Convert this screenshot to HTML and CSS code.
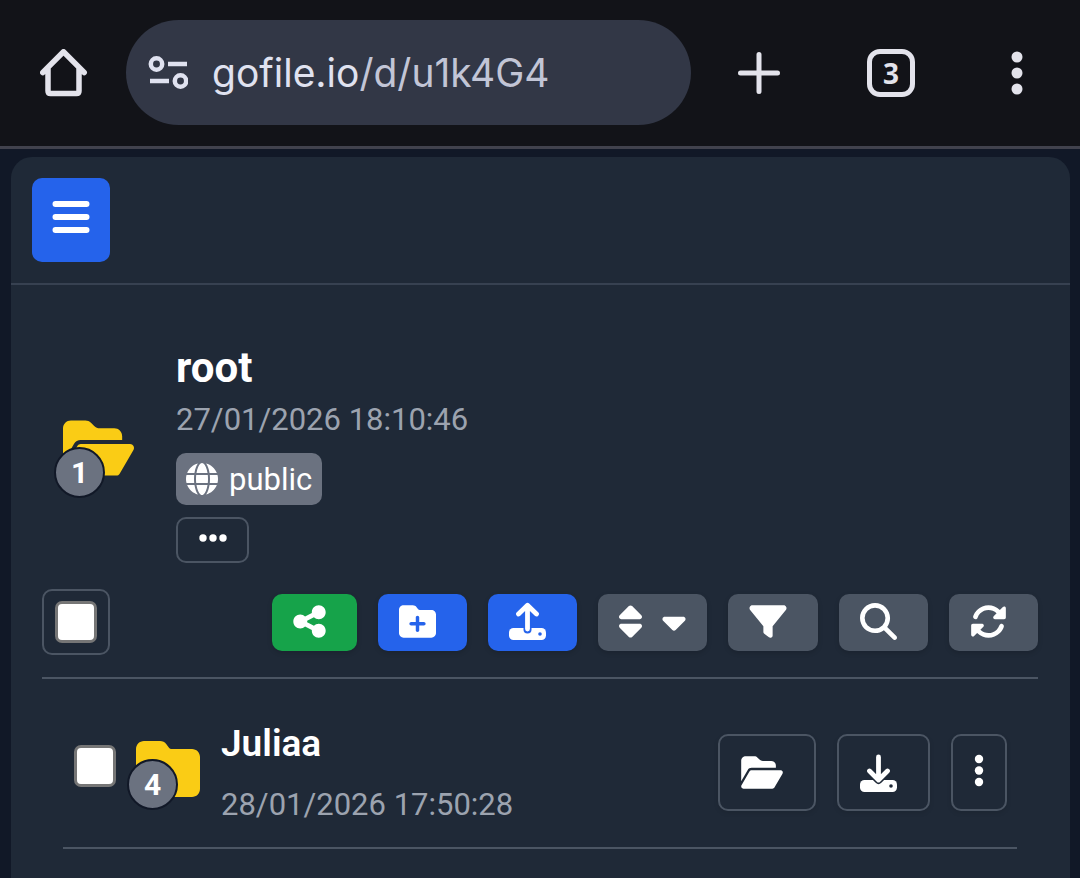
FILE: index.html
```
<!DOCTYPE html>
<html lang="en">
<head>
    <meta charset="UTF-8">
    <meta name="viewport" content="width=device-width, initial-scale=1.0">
    <title>root - Gofile</title>
    <link rel="stylesheet" href="styles.css">
</head>
<body>
    <header class="browser-bar">
        <button class="bar-btn" type="button" aria-label="Home">
            <svg width="48" height="48" viewBox="0 0 48 48" fill="none" stroke="currentColor" stroke-width="5.500" stroke-linejoin="round" stroke-linecap="round"><path d="M2.800 23.500L23.500 2.800L44.200 23.500M8 18.500V42Q8 44.500 10.500 44.500H36.500Q39 44.500 39 42V18.500"/></svg>
        </button>
        <div class="address">
            <button class="site-info" type="button" aria-label="Site information">
                <svg width="40" height="34" viewBox="0 0 40 34" fill="none" stroke="currentColor" stroke-width="4.500"><circle cx="8.500" cy="8" r="5.700"/><path d="M20 8H39M2 25H21"/><circle cx="32.500" cy="25" r="5.700"/></svg>
            </button>
            <button class="url" type="button" aria-label="Address">gofile.io<span class="url-path">/d/u1k4G4</span></button>
        </div>
        <nav class="bar-actions" aria-label="Browser">
            <button class="bar-btn" type="button" aria-label="New tab">
                <svg width="44" height="44" viewBox="0 0 44 44" stroke="currentColor" stroke-width="5" stroke-linecap="round"><path d="M22 3.500V40.500M3.500 22H40.500"/></svg>
            </button>
            <button class="bar-btn tab-count" type="button" aria-label="Open tabs: 3">3</button>
            <button class="bar-btn bar-menu" type="button" aria-label="More">
                <svg width="12" height="44" viewBox="0 0 12 44" fill="currentColor"><circle cx="6" cy="6" r="5.500"/><circle cx="6" cy="22" r="5.500"/><circle cx="6" cy="38" r="5.500"/></svg>
            </button>
        </nav>
    </header>

    <main class="panel">
        <div class="panel-header">
            <button class="menu-btn" type="button" aria-label="Menu">
                <svg width="38" height="34" viewBox="0 0 38 34" stroke="currentColor" stroke-width="6" stroke-linecap="round"><path d="M3.500 4H34.500M3.500 17H34.500M3.500 30H34.500"/></svg>
            </button>
        </div>

        <div class="content">
            <section class="root">
                <div class="root-icon">
                    <div class="folder folder-open">
                        <svg width="71" height="64" viewBox="0 0 576 512" fill="currentColor"><path d="M88.700 223.800L0 375.800V96C0 60.700 28.700 32 64 32h117.500c17 0 33.300 6.700 45.300 18.700l26.500 26.500c12 12 28.300 18.700 45.300 18.700H416c35.300 0 64 28.700 64 64v32H144c-22.800 0-43.800 12.100-55.300 31.800zm27.600 16.100C122.100 230 132.600 224 144 224h400c11.500 0 22 6.100 27.700 16.100s5.700 22.200-.1 32.100l-112 192C453.900 474 443.400 480 432 480H32c-11.500 0-22-6.100-27.700-16.100s-5.700-22.200 .1-32.100l112-192z"/></svg>
                        <span class="count">1</span>
                    </div>
                </div>
                <div class="root-info">
                    <h1 class="root-name">root</h1>
                    <p class="date">27/01/2026 18:10:46</p>
                    <span class="badge">
                        <svg width="32" height="32" viewBox="0 0 512 512" fill="currentColor"><path d="M352 256c0 22.200-1.200 43.600-3.300 64H163.400c-2.200-20.400-3.300-41.800-3.300-64s1.200-43.600 3.300-64h185.300c2.200 20.400 3.300 41.800 3.300 64zm28.800-64h123.100c5.300 20.500 8.100 41.900 8.100 64s-2.800 43.500-8.100 64H380.800c2.100-20.600 3.200-42 3.200-64s-1.100-43.400-3.200-64zm112.600-32H376.700c-10-63.900-29.800-117.400-55.300-151.600c78.300 20.700 142 77.500 171.900 151.600zm-149.100 0H167.700c6.100-36.400 15.500-68.600 27-94.700c10.500-23.600 22.200-40.700 33.500-51.500C239.400 3.200 248.700 0 256 0s16.600 3.200 27.800 13.800c11.300 10.800 23 27.900 33.500 51.500c11.600 26 20.900 58.200 27 94.700zm-209 0H18.600C48.600 85.900 112.200 29.100 190.600 8.400C165.100 42.600 145.300 96.100 135.300 160zM8.100 192h123.100c-2.100 20.600-3.200 42-3.200 64s1.100 43.400 3.200 64H8.100C2.800 299.500 0 278.100 0 256s2.800-43.500 8.100-64zM194.700 446.600c-11.600-26-20.900-58.200-27-94.600h176.600c-6.100 36.400-15.500 68.600-27 94.600c-10.500 23.600-22.200 40.700-33.500 51.500C272.600 508.800 263.300 512 256 512s-16.600-3.200-27.800-13.800c-11.300-10.800-23-27.900-33.500-51.500zM135.300 352c10 63.900 29.800 117.400 55.300 151.600C112.200 482.900 48.600 426.100 18.600 352h116.700zm358.100 0c-30 74.100-93.600 130.900-171.900 151.600c25.500-34.200 45.200-87.700 55.300-151.600h116.600z"/></svg>
                        public
                    </span>
                    <button class="outline-btn more-btn" type="button" aria-label="Show details">
                        <svg width="28" height="8" viewBox="0 0 28 8" fill="currentColor"><circle cx="4" cy="4" r="3.700"/><circle cx="14" cy="4" r="3.700"/><circle cx="24" cy="4" r="3.700"/></svg>
                    </button>
                </div>
            </section>

            <div class="toolbar">
                <label class="select-all"><input class="check" type="checkbox" aria-label="Select all"></label>
                <div class="toolbar-actions">
                    <button class="btn btn-green" type="button" aria-label="Share">
                        <svg width="33" height="37" viewBox="0 0 448 512" fill="currentColor"><path d="M352 224c53 0 96-43 96-96s-43-96-96-96s-96 43-96 96c0 4 .2 8 .7 11.900l-94.100 47C145.400 170.200 121.900 160 96 160c-53 0-96 43-96 96s43 96 96 96c25.900 0 49.400-10.200 66.600-26.900l94.100 47c-.5 3.900-.7 7.800-.7 11.900c0 53 43 96 96 96s96-43 96-96s-43-96-96-96c-25.900 0-49.400 10.200-66.600 26.900l-94.100-47c.5-3.900 .7-7.800 .7-11.900s-.2-8-.7-11.900l94.100-47C302.600 213.800 326.100 224 352 224z"/></svg>
                    </button>
                    <button class="btn btn-blue" type="button" aria-label="New folder">
                        <svg width="37" height="37" viewBox="0 0 512 512" fill="currentColor"><path d="M512 416c0 35.300-28.700 64-64 64H64c-35.300 0-64-28.700-64-64V96C0 60.700 28.700 32 64 32h128c20.100 0 39.100 9.500 51.200 25.600l19.200 25.600c6 8.100 15.500 12.800 25.600 12.800h160c35.300 0 64 28.700 64 64v256zM232 376c0 13.300 10.700 24 24 24s24-10.700 24-24v-64h64c13.300 0 24-10.700 24-24s-10.700-24-24-24h-64v-64c0-13.300-10.700-24-24-24s-24 10.700-24 24v64h-64c-13.300 0-24 10.700-24 24s10.700 24 24 24h64v64z"/></svg>
                    </button>
                    <button class="btn btn-blue" type="button" aria-label="Upload">
                        <svg width="37" height="38" viewBox="0 0 37 38" fill="none" stroke-linecap="round" stroke-linejoin="round">
                            <rect x="0" y="26" width="37" height="12" rx="4.500" fill="currentColor"/>
                            <circle class="cutout-fill" cx="31" cy="32" r="1.800"/>
                            <path class="cutout" d="M18.500 20V27.500" stroke-width="8"/>
                            <path d="M18.500 4V27M9.500 12L18.500 3.200L27.500 12" stroke="currentColor" stroke-width="4.800"/>
                        </svg>
                    </button>
                    <button class="btn btn-gray btn-sort" type="button" aria-label="Sort">
                        <svg width="23" height="37" viewBox="0 0 320 512" fill="currentColor"><path d="M137.400 41.400c12.500-12.500 32.800-12.500 45.300 0l128 128c9.200 9.200 11.900 22.900 6.900 34.900s-16.600 19.800-29.600 19.800H32c-12.900 0-24.600-7.800-29.600-19.800s-2.200-25.700 6.900-34.900l128-128zm0 429.300l-128-128c-9.200-9.200-11.900-22.900-6.900-34.900s16.600-19.800 29.600-19.800h256c12.900 0 24.600 7.800 29.600 19.800s2.200 25.700-6.900 34.900l-128 128c-12.500 12.500-32.800 12.500-45.300 0z"/></svg>
                        <svg width="24" height="37" viewBox="0 0 320 512" fill="currentColor"><path d="M137.400 374.600c12.500 12.500 32.800 12.500 45.300 0l128-128c9.200-9.200 11.900-22.900 6.900-34.900s-16.600-19.800-29.600-19.800H32c-12.900 0-24.600 7.800-29.600 19.800s-2.200 25.700 6.900 34.900l128 128z"/></svg>
                    </button>
                    <button class="btn btn-gray" type="button" aria-label="Filter">
                        <svg width="38" height="37" viewBox="0 0 512 512" fill="currentColor"><path d="M3.900 54.900C10.500 40.900 24.500 32 40 32h432c15.500 0 29.500 8.900 36.100 22.900s4.600 30.500-5.200 42.500L320 320.900V448c0 12.100-6.800 23.200-17.700 28.600s-23.800 4.300-33.500-3l-64-48c-8.100-6-12.800-15.500-12.800-25.600v-79.100L9 97.300C-.7 85.400-2.800 68.800 3.900 54.900z"/></svg>
                    </button>
                    <button class="btn btn-gray" type="button" aria-label="Search">
                        <svg width="37" height="37" viewBox="0 0 512 512" fill="currentColor"><path d="M416 208c0 45.900-14.900 88.300-40 122.700L502.600 457.400c12.500 12.500 12.500 32.800 0 45.300s-32.800 12.500-45.300 0L330.700 376c-34.400 25.200-76.800 40-122.700 40C93.100 416 0 322.900 0 208S93.100 0 208 0S416 93.100 416 208zM208 352a144 144 0 1 0 0-288 144 144 0 1 0 0 288z"/></svg>
                    </button>
                    <button class="btn btn-gray" type="button" aria-label="Refresh">
                        <svg width="37" height="37" viewBox="0 0 512 512" fill="currentColor"><path d="M142.900 142.900c-17.500 17.500-30.100 38-37.800 59.800c-5.900 16.700-24.200 25.400-40.800 19.500s-25.400-24.200-19.500-40.800C55.600 150.700 73.200 122 97.600 97.600c87.200-87.200 228.300-87.500 315.800-1L455 55c6.900-6.900 17.200-8.900 26.200-5.200s14.800 12.500 14.800 22.200v128c0 13.300-10.700 24-24 24H344c-9.700 0-18.500-5.800-22.200-14.800s-1.700-19.300 5.200-26.200l41.100-41.100c-62.600-61.500-163.100-61.200-225.300 1zM16 312c0-13.300 10.700-24 24-24h128c9.700 0 18.500 5.800 22.200 14.800s1.700 19.300-5.200 26.200l-41.100 41.100c62.600 61.500 163.100 61.200 225.300-1c17.500-17.500 30.100-38 37.800-59.800c5.900-16.700 24.200-25.400 40.800-19.500s25.400 24.200 19.500 40.800c-10.800 30.600-28.400 59.300-52.900 83.800c-87.200 87.200-228.300 87.500-315.800 1L57 457c-6.900 6.900-17.200 8.900-26.200 5.200S16 449.700 16 440V312z"/></svg>
                    </button>
                </div>
            </div>

            <article class="item">
                <div class="item-lead">
                    <input class="check item-check" type="checkbox" aria-label="Select Juliaa">
                    <div class="folder">
                        <svg width="64" height="64" viewBox="0 0 512 512" fill="currentColor"><path d="M64 480H448c35.300 0 64-28.700 64-64V160c0-35.300-28.700-64-64-64H288c-10.100 0-19.600-4.700-25.600-12.800L243.200 57.600C231.100 41.500 212.100 32 192 32H64C28.700 32 0 60.700 0 96V416c0 35.300 28.700 64 64 64z"/></svg>
                        <span class="count">4</span>
                    </div>
                </div>
                <div class="item-info">
                    <a class="item-name" href="#">Juliaa</a>
                    <p class="date">28/01/2026 17:50:28</p>
                </div>
                <div class="item-actions">
                    <button class="outline-btn item-btn" type="button" aria-label="Open">
                        <svg width="42" height="37" viewBox="0 0 576 512" fill="currentColor"><path d="M88.700 223.800L0 375.800V96C0 60.700 28.700 32 64 32h117.500c17 0 33.300 6.700 45.300 18.700l26.500 26.500c12 12 28.300 18.700 45.300 18.700H416c35.300 0 64 28.700 64 64v32H144c-22.800 0-43.800 12.100-55.300 31.800zm27.600 16.100C122.100 230 132.600 224 144 224h400c11.500 0 22 6.100 27.700 16.100s5.700 22.200-.1 32.100l-112 192C453.900 474 443.400 480 432 480H32c-11.500 0-22-6.100-27.700-16.100s-5.700-22.200 .1-32.100l112-192z"/></svg>
                    </button>
                    <button class="outline-btn item-btn" type="button" aria-label="Download">
                        <svg width="37" height="38" viewBox="0 0 37 38" fill="none" stroke-linecap="round" stroke-linejoin="round">
                            <rect x="0" y="26" width="37" height="12" rx="4.500" fill="currentColor"/>
                            <circle class="cutout-fill" cx="31" cy="32" r="1.800"/>
                            <path class="cutout" d="M9.500 17L18.500 26L27.500 17" stroke-width="8"/>
                            <path d="M18.500 3V25M9.500 17L18.500 26L27.500 17" stroke="currentColor" stroke-width="4.800"/>
                        </svg>
                    </button>
                    <button class="outline-btn item-btn item-menu" type="button" aria-label="More actions">
                        <svg width="10" height="34" viewBox="0 0 10 34" fill="currentColor"><circle cx="5" cy="5" r="4.200"/><circle cx="5" cy="16.500" r="4.200"/><circle cx="5" cy="28" r="4.200"/></svg>
                    </button>
                </div>
            </article>
        </div>
    </main>
</body>
</html>
```
FILE: styles.css
```
:root {
    --bar: #121318;
    --bar-text: #e3e3eb;
    --page: #111827;
    --panel: #1f2937;
    --line: #4b5563;
    --blue: #2563eb;
    --green: #16a34a;
    --muted: #9ca3af;
    --folder: #facc15;
    --white: #fff;
}

* {
    margin: 0;
    padding: 0;
    box-sizing: border-box;
}

body {
    font-family: Roboto, "Liberation Sans", sans-serif;
    background: var(--page);
    color: var(--white);
    min-height: 100vh;
    display: flex;
    flex-direction: column;
}

button {
    font: inherit;
    color: inherit;
    background: none;
    border: none;
    cursor: pointer;
}

svg {
    display: block;
    flex-shrink: 0;
}

/* Browser bar */
.browser-bar {
    display: flex;
    align-items: center;
    padding: 20px 57px 21px 40px;
    background: var(--bar);
    border-bottom: 3px solid #41424d;
    color: var(--bar-text);
}

.bar-btn {
    display: flex;
    align-items: center;
    justify-content: center;
}

.address {
    flex: 1;
    display: flex;
    align-items: center;
    gap: 24px;
    height: 105px;
    margin-left: 38px;
    padding: 0 22px;
    border-radius: 53px;
    background: #323746;
    color: #e0e2f0;
}

.url {
    flex: 1;
    text-align: left;
    font-family: Inter, Roboto, sans-serif;
    font-size: 39px;
    line-height: 52px;
    white-space: nowrap;
}

.url-path {
    color: #c2c5d6;
}

.bar-actions {
    display: flex;
    align-items: center;
    margin-left: 46px;
}

.tab-count {
    width: 48px;
    height: 48px;
    margin: 0 96px 0 86px;
    border: 5px solid var(--bar-text);
    border-radius: 13px;
    font-family: "Open Sans", Roboto, sans-serif;
    font-size: 28px;
    font-weight: 700;
    line-height: 38px;
}

/* Main panel */
.panel {
    flex: 1;
    margin: 8px 10px 0 11px;
    background: var(--panel);
    border-radius: 21px 21px 0 0;
}

.panel-header {
    padding: 21px;
    border-bottom: 2px solid #374151;
}

.menu-btn {
    display: flex;
    justify-content: center;
    width: 78px;
    height: 84px;
    padding-top: 22px;
    border-radius: 10px;
    background: var(--blue);
}

.content {
    padding: 57px 32px 0 31px;
}

/* Current folder */
.root {
    display: flex;
    align-items: center;
}

.root-icon {
    width: 134px;
    padding: 0 0 9px 21px;
}

.folder {
    position: relative;
    width: 64px;
    color: var(--folder);
}

.folder-open {
    width: 71px;
}

.count {
    position: absolute;
    left: -9px;
    bottom: -9px;
    width: 51px;
    height: 51px;
    border: 2px solid var(--page);
    border-radius: 50%;
    background: #6b7280;
    color: var(--white);
    font-size: 30px;
    font-weight: 700;
    line-height: 47px;
    text-align: center;
}

.folder-open .count {
    bottom: -18px;
}

.root-info {
    display: flex;
    flex-direction: column;
    align-items: flex-start;
}

.root-name {
    font-size: 42px;
    font-weight: 700;
    line-height: 52px;
}

.date {
    color: var(--muted);
    font-size: 31px;
    line-height: 51px;
    white-space: nowrap;
}

.badge {
    display: flex;
    align-items: center;
    gap: 11px;
    height: 52px;
    margin: 8px 0 12px;
    padding: 0 10px;
    border-radius: 10px;
    background: #6b7280;
    font-size: 31px;
}

.outline-btn {
    display: flex;
    align-items: center;
    justify-content: center;
    border: 2px solid var(--line);
    border-radius: 10px;
}

.more-btn {
    width: 73px;
    height: 46px;
    padding-bottom: 4px;
}

/* Toolbar */
.toolbar {
    display: flex;
    align-items: center;
    justify-content: space-between;
    margin-top: 26px;
    padding-bottom: 22px;
    border-bottom: 2px solid var(--line);
}

.select-all {
    padding: 10px 11px;
    border: 2px solid var(--line);
    border-radius: 10px;
}

.check {
    display: block;
    appearance: none;
    width: 42px;
    height: 42px;
    border: 3px solid #767676;
    border-radius: 7px;
    background: var(--white);
}

.check:checked {
    background: var(--blue);
}

.toolbar-actions {
    display: flex;
    gap: 21px;
}

.btn {
    display: flex;
    align-items: center;
    height: 57px;
    padding: 0 31px 2px 21px;
    border-radius: 10px;
    box-shadow: 0 2px 5px rgba(0, 0, 0, 0.15);
}

.btn-green {
    background: var(--green);
}

.btn-blue {
    background: var(--blue);
}

.btn-gray {
    background: var(--line);
}

.btn-sort {
    gap: 20px;
    padding-right: 21px;
}

/* Gaps where an arrow passes over the tray */
.cutout {
    stroke: var(--panel);
}

.cutout-fill {
    fill: var(--panel);
}

.btn-blue .cutout {
    stroke: var(--blue);
}

.btn-blue .cutout-fill {
    fill: var(--blue);
}

/* File rows */
.item {
    display: flex;
    align-items: center;
    margin: 0 21px;
    padding: 36px 10px 17px 11px;
    border-bottom: 2px solid var(--line);
}

.item-lead {
    display: flex;
    align-items: center;
    gap: 20px;
    padding-bottom: 8px;
}

.item-check {
    margin-bottom: 5px;
}

.item-info {
    flex: 1;
    margin-left: 21px;
}

.item-name {
    display: block;
    margin-bottom: 6px;
    color: var(--white);
    font-size: 37px;
    font-weight: 600;
    line-height: 58px;
    text-decoration: none;
}

.item-actions {
    display: flex;
    gap: 21px;
}

.item-btn {
    height: 77px;
    padding: 0 31px 0 21px;
    box-shadow: 0 2px 5px rgba(0, 0, 0, 0.1);
}

.item-menu {
    width: 56px;
    padding: 0 0 3px;
}
```
